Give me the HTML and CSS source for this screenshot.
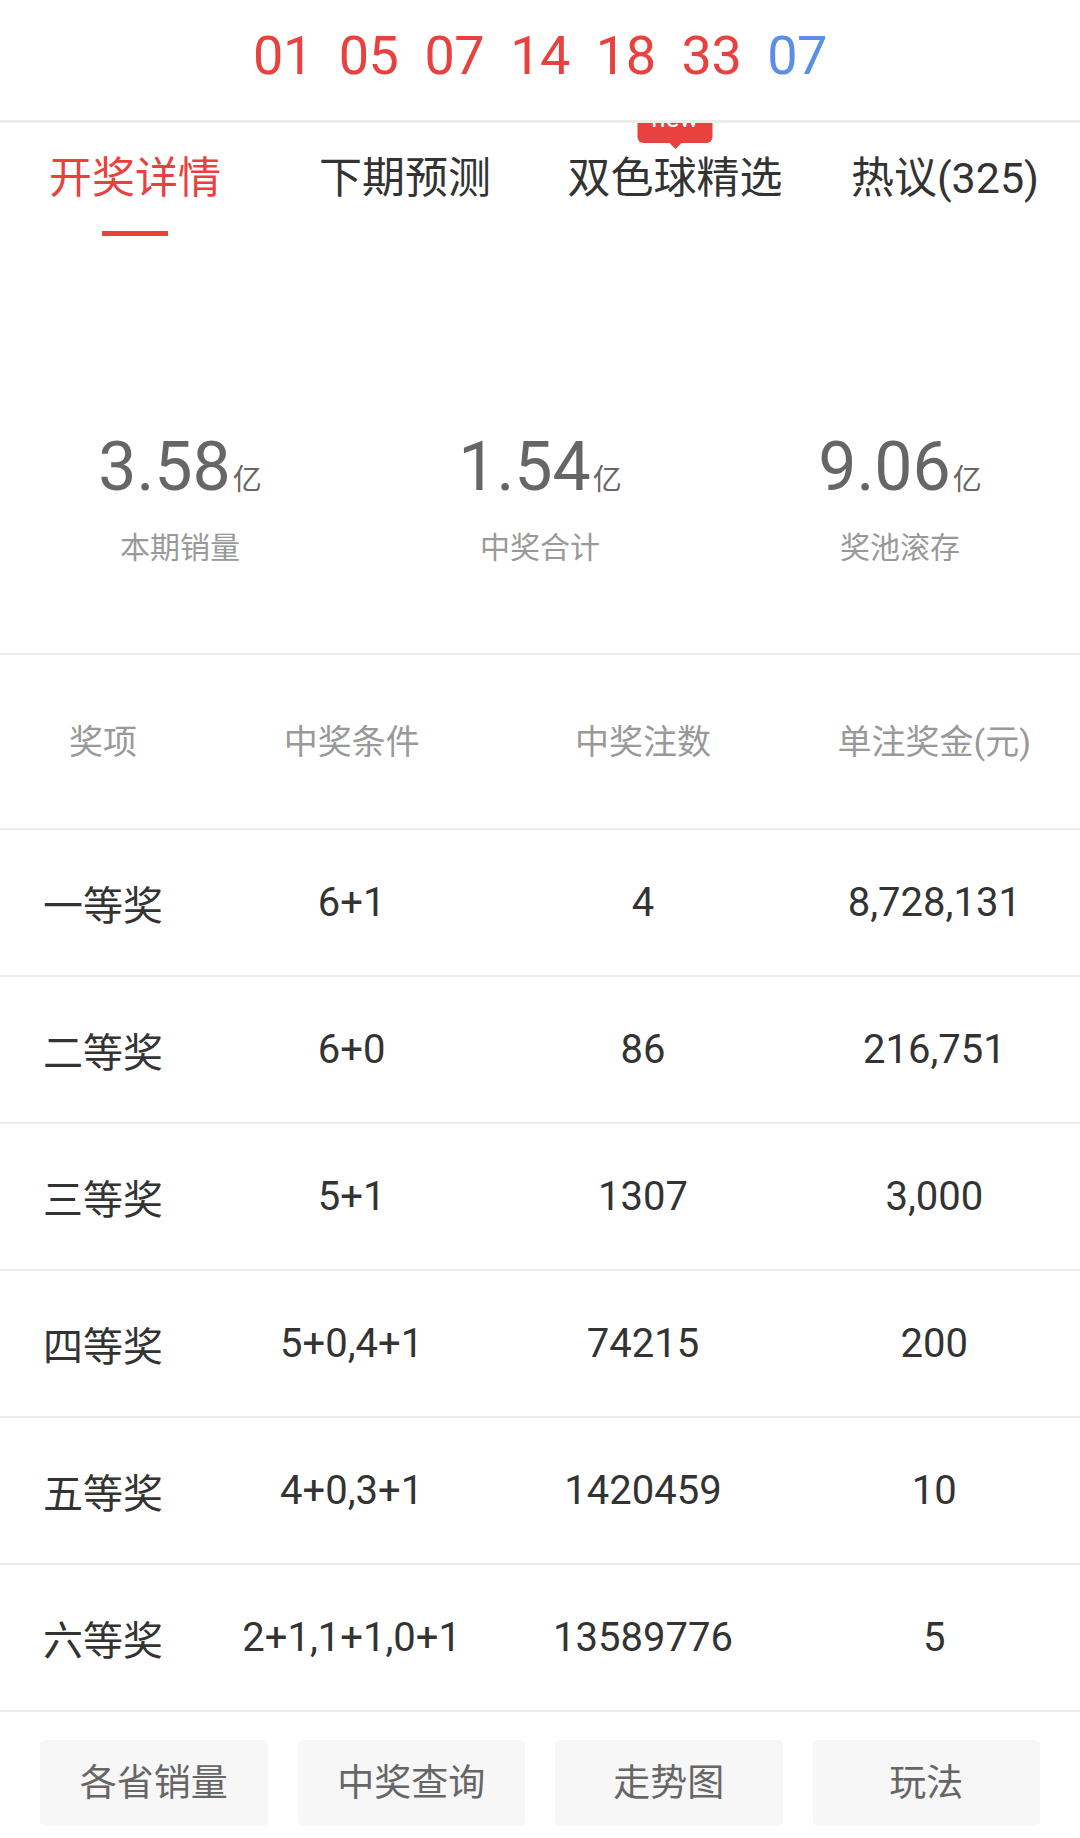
FILE: index.html
```html
<!DOCTYPE html>
<html lang="zh-CN">
<head>
<meta charset="utf-8">
<title>开奖详情</title>
<link rel="stylesheet" href="styles.css">
</head>
<body>
<div class="page">
  <header class="balls">
    <span class="ball red">01</span>
    <span class="ball red">05</span>
    <span class="ball red">07</span>
    <span class="ball red">14</span>
    <span class="ball red">18</span>
    <span class="ball red">33</span>
    <span class="ball blue">07</span>
  </header>

  <nav class="tabs">
    <div class="tab active"><span class="tab-label">开奖详情</span><span class="tab-line"></span></div>
    <div class="tab"><span class="tab-label">下期预测</span><span class="tab-line"></span></div>
    <div class="tab"><span class="badge">new</span><span class="tab-label">双色球精选</span><span class="tab-line"></span></div>
    <div class="tab"><span class="tab-label">热议(325)</span><span class="tab-line"></span></div>
  </nav>

  <section class="stats">
    <div class="stat">
      <div class="stat-value">3.58<span class="unit">亿</span></div>
      <div class="stat-label">本期销量</div>
    </div>
    <div class="stat">
      <div class="stat-value">1.54<span class="unit">亿</span></div>
      <div class="stat-label">中奖合计</div>
    </div>
    <div class="stat">
      <div class="stat-value">9.06<span class="unit">亿</span></div>
      <div class="stat-label">奖池滚存</div>
    </div>
  </section>

  <section class="table">
    <div class="row head">
      <div>奖项</div><div>中奖条件</div><div>中奖注数</div><div>单注奖金(元)</div>
    </div>
    <div class="row">
      <div>一等奖</div><div>6+1</div><div>4</div><div>8,728,131</div>
    </div>
    <div class="row">
      <div>二等奖</div><div>6+0</div><div>86</div><div>216,751</div>
    </div>
    <div class="row">
      <div>三等奖</div><div>5+1</div><div>1307</div><div>3,000</div>
    </div>
    <div class="row">
      <div>四等奖</div><div>5+0,4+1</div><div>74215</div><div>200</div>
    </div>
    <div class="row">
      <div>五等奖</div><div>4+0,3+1</div><div>1420459</div><div>10</div>
    </div>
    <div class="row">
      <div>六等奖</div><div>2+1,1+1,0+1</div><div>13589776</div><div>5</div>
    </div>
  </section>

  <footer class="actions">
    <div class="btn">各省销量</div>
    <div class="btn">中奖查询</div>
    <div class="btn">走势图</div>
    <div class="btn">玩法</div>
  </footer>
</div>
</body>
</html>
```

FILE: styles.css
```css
* { box-sizing: border-box; }
html, body { margin: 0; padding: 0; background: #fff; }
body {
  font-family: Roboto, "Noto Sans CJK SC", sans-serif;
  color: #333;
}
.page { width: 1080px; height: 1838px; overflow: hidden; }

.balls {
  position: relative;
  z-index: 2;
  background: #fff;
  height: 123px;
  border-bottom: 3px solid #ececec;
  display: flex;
  justify-content: center;
  align-items: center;
  gap: 26px;
  padding-bottom: 8px;
}
.ball { font-size: 54px; line-height: 60px; letter-spacing: -0.5px; }
.red { color: #e8413e; }
.blue { color: #5b8ee6; }

.tabs {
  display: grid;
  grid-template-columns: repeat(4, 1fr);
  height: 120px;
}
.tab {
  position: relative;
  display: flex;
  flex-direction: column;
  align-items: center;
  padding-top: 29px;
}
.tab-label { font-size: 43px; line-height: 52px; color: #333; }
.tab-line { width: 66px; height: 5px; margin-top: 27px; background: transparent; }
.tab.active .tab-label { color: #e8413e; }
.tab.active .tab-line { background: #e8413e; }

.badge {
  position: absolute;
  top: -24px;
  left: 50%;
  transform: translateX(-50%);
  width: 75px;
  height: 44px;
  border-radius: 6px;
  background: #e8413e;
  color: #fff;
  font-size: 26px;
  line-height: 38px;
  text-align: center;
}
.badge::after {
  content: "";
  position: absolute;
  left: 50%;
  bottom: -6px;
  margin-left: -7px;
  border-left: 7px solid transparent;
  border-right: 7px solid transparent;
  border-top: 7px solid #e8413e;
}

.stats {
  display: grid;
  grid-template-columns: repeat(3, 1fr);
  padding-top: 184px;
  height: 412px;
  border-bottom: 2px solid #ececec;
}
.stat { display: flex; flex-direction: column; align-items: center; }
.stat-value { font-size: 68px; line-height: 80px; color: #666; }
.unit { font-size: 29px; line-height: 30px; margin-left: 2px; }
.stat-label { margin-top: 21px; font-size: 30px; line-height: 40px; color: #999; }

.table { display: flex; flex-direction: column; }
.row {
  display: grid;
  grid-template-columns: 206px 1fr 1fr 1fr;
  height: 147px;
  border-bottom: 2px solid #ececec;
  align-items: center;
  font-size: 40px;
  color: #333;
}
.row > div { text-align: center; }
.row.head { height: 175px; font-size: 34px; color: #999; padding-bottom: 4px; }

.actions {
  display: grid;
  grid-template-columns: repeat(4, 1fr);
  gap: 30px;
  padding: 28px 40px 0;
}
.btn {
  height: 86px;
  background: #f7f7f7;
  border-radius: 5px;
  display: flex;
  align-items: center;
  justify-content: center;
  font-size: 37px;
  color: #666;
  padding-bottom: 6px;
}
```
